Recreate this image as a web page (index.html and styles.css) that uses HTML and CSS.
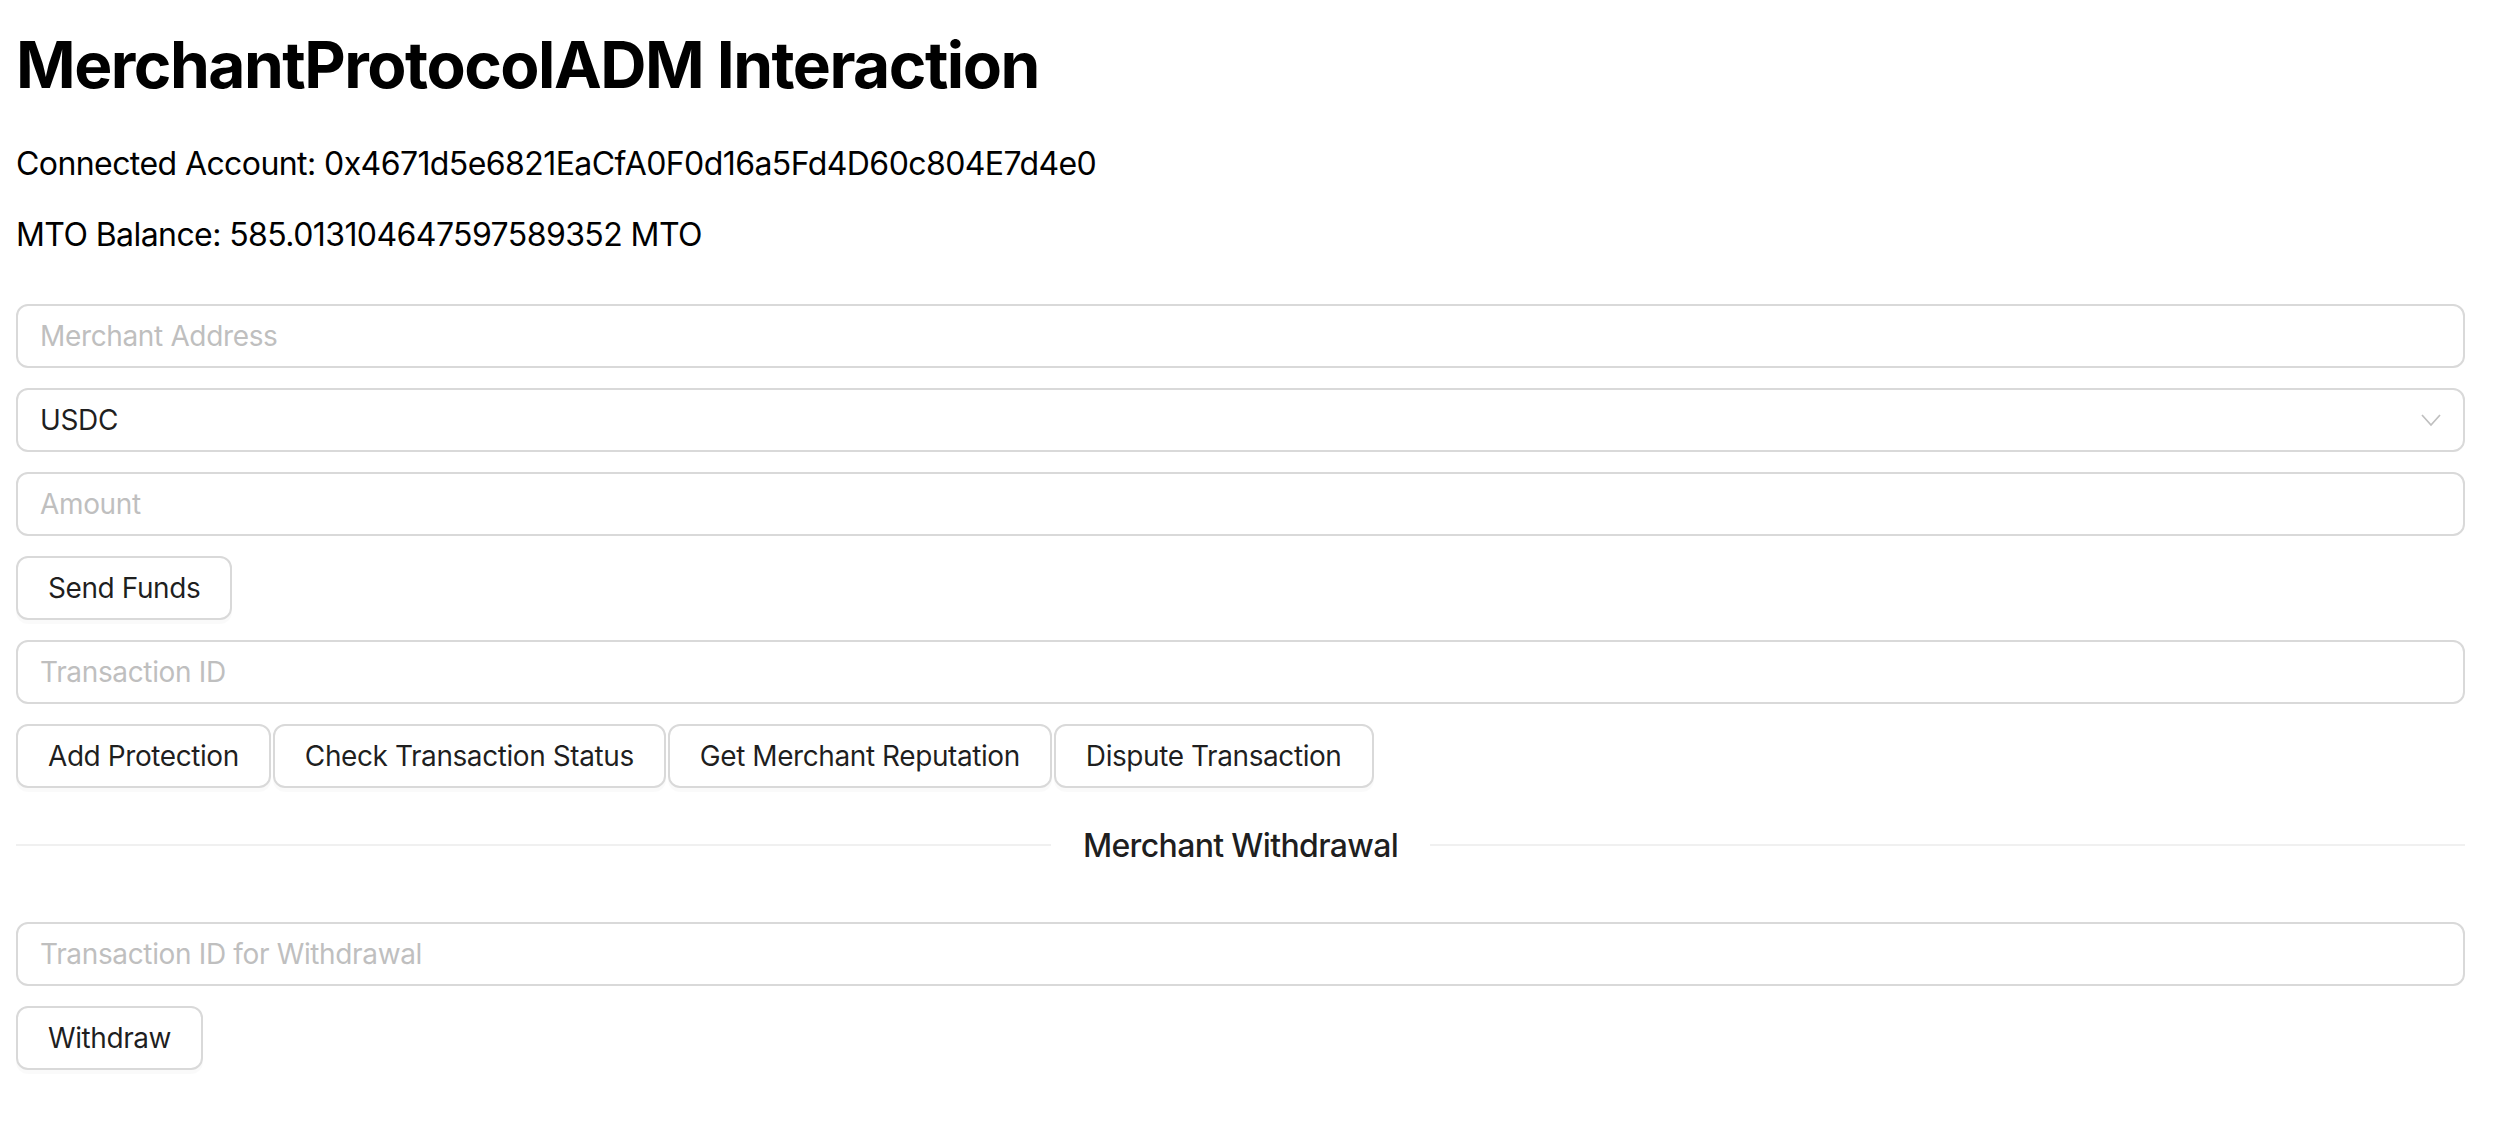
FILE: index.html
```html
<!DOCTYPE html>
<html lang="en">
<head>
<meta charset="utf-8">
<title>MerchantProtocolADM Interaction</title>
<link rel="stylesheet" href="styles.css">
</head>
<body>
<div class="app">
  <h1 class="title">MerchantProtocolADM Interaction</h1>
  <p class="info">Connected Account: 0x4671d5e6821EaCfA0F0d16a5Fd4D60c804E7d4e0</p>
  <p class="info">MTO Balance: 585.013104647597589352 MTO</p>

  <div class="form">
    <input class="field" type="text" placeholder="Merchant Address">
    <div class="field select">
      <span class="select-value">USDC</span>
      <svg class="select-arrow" width="20" height="14" viewBox="0 0 20 14" aria-hidden="true">
        <polyline points="1,2 10,12 19,2" fill="none" stroke="#bfbfbf" stroke-width="1.7" stroke-linejoin="miter"/>
      </svg>
    </div>
    <input class="field" type="text" placeholder="Amount">
    <div class="actions">
      <button class="btn" type="button">Send Funds</button>
    </div>
    <input class="field" type="text" placeholder="Transaction ID">
    <div class="actions">
      <button class="btn" type="button">Add Protection</button>
      <button class="btn" type="button">Check Transaction Status</button>
      <button class="btn" type="button">Get Merchant Reputation</button>
      <button class="btn" type="button">Dispute Transaction</button>
    </div>

    <div class="divider"><span class="divider-text">Merchant Withdrawal</span></div>

    <input class="field" type="text" placeholder="Transaction ID for Withdrawal">
    <div class="actions">
      <button class="btn" type="button">Withdraw</button>
    </div>
  </div>
</div>
</body>
</html>
```

FILE: styles.css
```css
* { box-sizing: border-box; }

body {
  margin: 0;
  background: #ffffff;
  font-family: Inter, "Liberation Sans", Arial, sans-serif;
  color: #000000;
}

.app {
  padding: 0 29px 0 16px;
}

.title {
  margin: 27px 0 41px;
  font-size: 64px;
  line-height: 76px;
  font-weight: 700;
  letter-spacing: -1.5px;
  color: #000;
}

.info {
  margin: 32px 0;
  font-size: 32px;
  line-height: normal;
  letter-spacing: -0.58px;
  color: #000;
}

.form {
  margin-top: 50px;
}

.field {
  display: block;
  width: 100%;
  height: 64px;
  margin: 0 0 20px;
  padding: 0 22px;
  border: 2px solid #d9d9d9;
  border-radius: 12px;
  background: #fff;
  font-family: inherit;
  font-size: 28px;
  letter-spacing: -0.35px;
  color: rgba(0, 0, 0, 0.88);
  outline: none;
}

.field::placeholder {
  color: #bfbfbf;
}

.select {
  display: flex;
  align-items: center;
  justify-content: space-between;
}

.select-arrow {
  display: block;
  flex: none;
}

.actions {
  display: flex;
  gap: 2px;
  margin-bottom: 20px;
}

.btn {
  height: 64px;
  padding: 0 30px;
  border: 2px solid #d9d9d9;
  border-radius: 12px;
  background: #fff;
  box-shadow: 0 4px 0 rgba(0, 0, 0, 0.02);
  font-family: inherit;
  font-size: 28px;
  letter-spacing: -0.42px;
  color: rgba(0, 0, 0, 0.88);
  cursor: pointer;
}

.divider {
  display: flex;
  align-items: center;
  height: 50px;
  margin: 32px 0 52px;
  font-size: 32px;
  font-weight: 500;
  letter-spacing: -0.65px;
  color: rgba(0, 0, 0, 0.88);
}

.divider::before,
.divider::after {
  content: "";
  flex: 1;
  border-top: 2px solid rgba(5, 5, 5, 0.06);
}

.divider-text {
  padding: 0 32px;
}
```
